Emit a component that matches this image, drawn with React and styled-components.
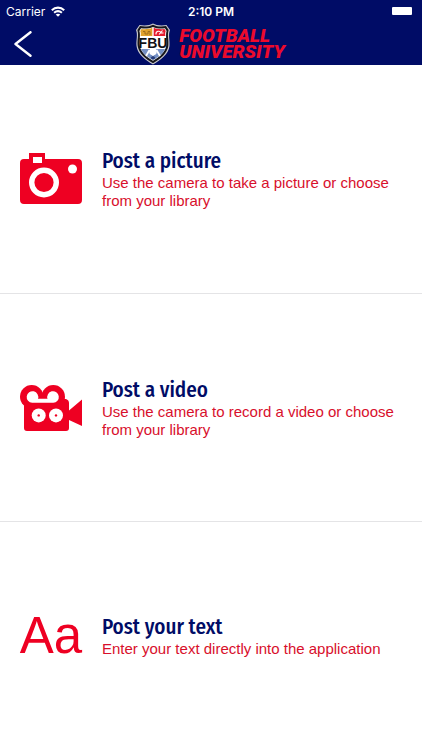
import React from "react";
import styled, { createGlobalStyle } from "styled-components";

const navy = "#000c66";
const red = "#ee0022";

const GlobalStyle = createGlobalStyle`
  * {
    box-sizing: border-box;
  }

  body {
    margin: 0;
    background: #ffffff;
    font-family: "Liberation Sans", Arial, sans-serif;
  }
`;

const WifiIcon = () => (
  <svg width="14" height="11" viewBox="0 0 14 11" fill="none" aria-hidden="true">
    <path d="M.8 4.2C4.4 .8 9.6 .8 13.2 4.2" stroke="#fff" strokeWidth="2.1" />
    <path d="M3.1 6.8C5.4 4.8 8.6 4.8 10.9 6.8" stroke="#fff" strokeWidth="2" />
    <path d="M7 10.8L4.7 8.6C6.1 7.5 7.9 7.5 9.3 8.6Z" fill="#fff" />
  </svg>
);

const BackIcon = () => (
  <svg width="18" height="26" viewBox="0 0 18 26" fill="none" aria-hidden="true">
    <path d="M16.5 1.2L1.5 13L16.5 24.8" stroke="#fff" strokeWidth="2.4" strokeLinecap="round" strokeLinejoin="round" />
  </svg>
);

const Shield = () => (
  <svg width="36" height="42" viewBox="0 0 36 42" aria-hidden="true">
    <path d="M18 .5C21 2.5 27 2.8 31.5 2L35 7C33 12 35 17 34.5 23C33.5 31 26 37 18 41.5C10 37 2.5 31 1.5 23C1 17 3 12 1 7L4.5 2C9 2.8 15 2.5 18 .5Z" fill="#c9c9cd" />
    <path d="M18 1.7C22 3.8 27 3.8 31 3L33.6 7C32 12 34 17 33.3 23C32.3 30 25.5 36 18 40.2C10.5 36 3.7 30 2.7 23C2 17 4 12 2.4 7L5 3C9 3.8 14 3.8 18 1.7Z" fill="#17171c" />
    <path d="M18 4C22 5.8 26.5 5.8 30 5.2L31.6 8C30.2 13 32 17 31.2 23C30.2 29 24.5 34 18 37.8C11.5 34 5.8 29 4.8 23C4 17 5.8 13 4.4 8L6 5.2C9.5 5.8 14 5.8 18 4Z" fill="#fff" />
    <path d="M17.3 4.8C14 6.3 9.6 6.5 6.5 6L5.3 8C6 10 5.9 11.5 5.6 13H17.3Z" fill="#dfa12c" />
    <path d="M18.7 4.8C22 6.3 26.4 6.5 29.5 6L30.7 8C30 10 30.1 11.5 30.4 13H18.7Z" fill="#e51c2f" />
    <path d="M8 8.5H10V11H13V8.5H15V12" fill="none" stroke="#9e6d1d" />
    <path d="M21 11.5C20.5 8 25 7 26 10H28.5M24 11.5L27.5 7.5" fill="none" stroke="#fff" strokeWidth="1.1" />
    <path d="M6 26C8 31 13 34.3 18 37C23 34.3 28 31 30 26Z" fill="#7590c4" />
    <path d="M14.5 27L11 33M21.5 27L25 33M18 27V37" stroke="#fff" strokeWidth="1.8" />
    <circle cx="18" cy="28.5" r="3.8" fill="#fff" />
    <path d="M15.5 35L18 32.5L20.5 35L18 37Z" fill="#273e7c" />
    <text x="18" y="24.6" textAnchor="middle" fontFamily="Liberation Sans, sans-serif" fontSize="14" fontWeight="700" fill="#111116">
      FBU
    </text>
  </svg>
);

const CameraIcon = () => (
  <svg width="62" height="52" viewBox="0 0 62 52" aria-hidden="true">
    <path d="M9 0H25V6H58Q62 6 62 10V47Q62 51 58 51H4Q0 51 0 47V10Q0 6 4 6H9Z" fill={red} />
    <path d="M13 4H22V10H13Z" fill="#fff" />
    <circle cx="24" cy="29.5" r="12.3" fill={red} stroke="#fff" strokeWidth="5.4" />
    <circle cx="52.5" cy="16" r="4.5" fill="#fff" />
  </svg>
);

const VideoIcon = () => (
  <svg width="62" height="46" viewBox="0 0 62 46" aria-hidden="true">
    <g fill={red}>
      <circle cx="11.7" cy="11.7" r="11.7" />
      <circle cx="33.3" cy="11.7" r="11.7" />
      <path d="M4 14H46Q49 15 49 18V25.5L62 14.5V41L49 35V43Q49 46 46 46H7Q4 46 4 43Z" />
    </g>
    <g fill="#fff">
      <path d="M12.2 17.8A5.8 5.8 0 1 1 18 13.8H27.5A5.8 5.8 0 1 1 33.3 17.8Z" />
      <circle cx="18.7" cy="30.4" r="7" />
      <circle cx="36" cy="30.4" r="7" />
    </g>
    <g fill={red}>
      <circle cx="18.7" cy="30.4" r="1.2" />
      <circle cx="36" cy="30.4" r="1.2" />
    </g>
  </svg>
);

const options = [
  {
    title: "Post a picture",
    text: "Use the camera to take a picture or choose from your library",
    icon: <CameraIcon />
  },
  {
    title: "Post a video",
    text: "Use the camera to record a video or choose from your library",
    icon: <VideoIcon />
  },
  {
    title: "Post your text",
    text: "Enter your text directly into the application",
    icon: "Aa"
  }
];

function App() {
  return (
    <Container>
      <GlobalStyle />
      <Header>
        <StatusBar>
          <Carrier>
            Carrier
            <WifiIcon />
          </Carrier>
          <Time>2:10 PM</Time>
          <Battery />
        </StatusBar>
        <NavBar>
          <BackButton type="button" aria-label="Back">
            <BackIcon />
          </BackButton>
          <Brand>
            <Shield />
            <Wordmark>FOOTBALL UNIVERSITY</Wordmark>
          </Brand>
        </NavBar>
      </Header>
      <Options>
        {options.map(({ title, text, icon }) => (
          <Option key={title} type="button">
            <OptionIcon>{icon}</OptionIcon>
            <OptionBody>
              <Title>{title}</Title>
              <Description>{text}</Description>
            </OptionBody>
          </Option>
        ))}
      </Options>
    </Container>
  );
}

export default App;

const Container = styled.div`
  display: flex;
  flex-direction: column;
  min-height: 100vh;
`;

const Header = styled.header`
  background: ${navy};
  color: white;
`;

const StatusBar = styled.div`
  display: grid;
  grid-template-columns: 1fr auto 1fr;
  align-items: center;
  height: 22px;
  font-family: Inter, sans-serif;
  font-size: 12px;
`;

const Carrier = styled.div`
  display: flex;
  align-items: center;
  gap: 6px;
  padding-left: 6px;
`;

const Time = styled.div`
  font-weight: 600;
`;

const Battery = styled.div`
  justify-self: end;
  width: 20px;
  height: 8px;
  margin-right: 10px;
  border-radius: 1px;
  background: white;
`;

const NavBar = styled.div`
  display: grid;
  grid-template-columns: 1fr auto 1fr;
  align-items: center;
  height: 43px;
  padding: 0 14px;
`;

const BackButton = styled.button`
  display: flex;
  justify-self: start;
  padding: 0;
  border: 0;
  background: none;
  cursor: pointer;
`;

const Brand = styled.div`
  display: flex;
  align-items: center;
  gap: 8px;
  padding-right: 2px;
`;

const Wordmark = styled.div`
  width: min-content;
  color: #ec0a2c;
  font-family: Roboto, sans-serif;
  font-size: 19px;
  font-style: italic;
  font-weight: 900;
  line-height: 16px;
`;

const Options = styled.main`
  display: flex;
  flex: 1;
  flex-direction: column;
`;

const Option = styled.button`
  display: flex;
  flex: 1 0 0;
  align-items: center;
  gap: 20px;
  padding: 20px;
  border: 0;
  background: white;
  font-family: inherit;
  text-align: left;
  cursor: pointer;

  &:not(:last-child) {
    border-bottom: 1px solid #e4e4e6;
  }
`;

const OptionIcon = styled.span`
  display: flex;
  flex: none;
  justify-content: center;
  width: 62px;
  color: ${red};
  font-size: 51px;
  line-height: 54px;
`;

const OptionBody = styled.span`
  display: flex;
  flex: 1;
  flex-direction: column;
`;

const Title = styled.span`
  color: ${navy};
  font-family: "Fira Sans Condensed", "Roboto Condensed", "Open Sans Condensed", "Liberation Sans Narrow", sans-serif;
  font-size: 21px;
  font-weight: 500;
  line-height: 26px;
`;

const Description = styled.span`
  color: #d80f2c;
  font-size: 15px;
  line-height: 18px;
`;
